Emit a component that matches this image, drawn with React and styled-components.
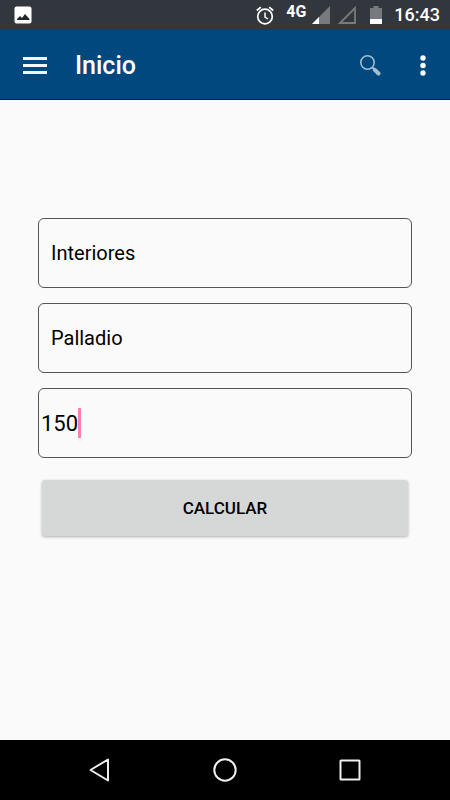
import { useState } from 'react'
import styled, { createGlobalStyle } from 'styled-components'

const App = () => {
    const [category, setCategory] = useState('Interiores')
    const [product, setProduct] = useState('Palladio')
    const [amount, setAmount] = useState('150')

    const handleSubmit = (e) => {
        e.preventDefault()
    }

    return (
        <Screen>
            <GlobalStyle />
            <StatusBar>
                <svg width='18' height='18' viewBox='0 0 18 18'>
                    <rect x='0.5' y='0.5' width='17' height='17' rx='2' fill='#fff' />
                    <path d='M3 14v-1l3-3 2 2 3-4 4.500 5v1z' fill='#22262b' />
                </svg>
                <StatusIcons>
                    {/* alarm */}
                    <svg width='18' height='19' viewBox='0 0 18 19' fill='none' stroke='#fff'>
                        <circle cx='9' cy='10.500' r='7.300' strokeWidth='1.700' />
                        <path d='M9 6.500v4.500l3 2' strokeWidth='1.500' />
                        <path d='M0.800 4.500l4-3.400M17.200 4.500l-4-3.400' strokeWidth='1.700' />
                    </svg>
                    <Network>4G</Network>
                    {/* signal, sim 1 and sim 2 */}
                    <Signal width='18' height='18' viewBox='0 0 18 18'>
                        <path d='M18 0v18H0z' fill='#777a7e' />
                        <path d='M7 11v7H0z' fill='#fff' />
                    </Signal>
                    <Signal $second width='18' height='18' viewBox='0 0 18 18'>
                        <path d='M17 2v15H2z' fill='none' stroke='#777a7e' strokeWidth='1.800' />
                    </Signal>
                    <Battery width='12' height='18' viewBox='0 0 12 18'>
                        <path d='M3.500 0h5v2H12v11H0V2h3.500z' fill='#777a7e' />
                        <path d='M0 13h12v4.500q0 .5-.5.5H.5q-.5 0-.5-.5z' fill='#fff' />
                    </Battery>
                    <Clock>16:43</Clock>
                </StatusIcons>
            </StatusBar>

            <Toolbar>
                <IconButton type='button' aria-label='Menu'>
                    <svg width='24' height='18' viewBox='0 0 24 18' fill='#f5f5ff'>
                        <rect y='0' width='24' height='3' />
                        <rect y='7' width='24' height='3' />
                        <rect y='14' width='24' height='3' />
                    </svg>
                </IconButton>
                <Title>Inicio</Title>
                <Actions>
                    <IconButton type='button' aria-label='Buscar'>
                        <svg width='21' height='21' viewBox='0 0 21 21' fill='none' stroke='#a3bdd2'>
                            <circle cx='7.500' cy='7.500' r='6.700' strokeWidth='1.600' />
                            <path d='M12 12l2.500 2.500' strokeWidth='2' />
                            <path d='M14.800 14.800l3.700 3.700' strokeWidth='4' strokeLinecap='round' />
                        </svg>
                    </IconButton>
                    <IconButton type='button' aria-label='Más opciones'>
                        <svg width='6' height='21' viewBox='0 0 6 21' fill='#fff'>
                            <circle cx='3' cy='3' r='2.700' />
                            <circle cx='3' cy='10.500' r='2.700' />
                            <circle cx='3' cy='18' r='2.700' />
                        </svg>
                    </IconButton>
                </Actions>
            </Toolbar>

            <Form onSubmit={handleSubmit}>
                <Select aria-label='Categoría' value={category} onChange={(e) => setCategory(e.target.value)}>
                    <option>Interiores</option>
                </Select>
                <Select aria-label='Producto' value={product} onChange={(e) => setProduct(e.target.value)}>
                    <option>Palladio</option>
                </Select>
                <AmountField>
                    <AmountInput
                        type='text'
                        inputMode='numeric'
                        aria-label='Cantidad'
                        $chars={amount.length}
                        value={amount}
                        onChange={(e) => setAmount(e.target.value)}
                    />
                    <Caret />
                </AmountField>
                <SubmitButton type='submit'>CALCULAR</SubmitButton>
            </Form>

            <NavBar>
                <NavButton type='button' aria-label='Atrás'>
                    <svg width='24' height='24' viewBox='0 0 24 24'>
                        <path d='M20 1.500v21L2.500 12z' strokeLinejoin='round' />
                    </svg>
                </NavButton>
                <NavButton type='button' aria-label='Inicio'>
                    <svg width='24' height='24' viewBox='0 0 24 24'>
                        <circle cx='12' cy='12' r='10.700' />
                    </svg>
                </NavButton>
                <NavButton type='button' aria-label='Recientes'>
                    <svg width='24' height='24' viewBox='0 0 24 24'>
                        <rect x='2.500' y='2.500' width='19' height='19' rx='0.500' />
                    </svg>
                </NavButton>
            </NavBar>
        </Screen>
    )
}

export default App

const GlobalStyle = createGlobalStyle`
* {
    box-sizing: border-box;
}
body {
    margin: 0;
    background: #fafafa;
    font-family: Roboto, sans-serif;
}
button, input, select {
    font-family: inherit;
}
svg {
    display: block;
}
`

const Screen = styled.div`
    display: flex;
    flex-direction: column;
    min-height: 100vh;
`

const StatusBar = styled.div`
    display: flex;
    align-items: center;
    justify-content: space-between;
    height: 30px;
    padding: 0 10px 0 14px;
    background: #32373e;
    color: #fff;
`

const StatusIcons = styled.div`
    display: flex;
    align-items: center;
`

const Network = styled.span`
    align-self: flex-start;
    margin-left: 12px;
    font-size: 16px;
    font-weight: 700;
    line-height: 14px;
`

const Signal = styled.svg`
    margin-left: ${props => props.$second ? '8px' : '6px'};
`

const Battery = styled.svg`
    margin-left: 14px;
`

const Clock = styled.span`
    margin-left: 12px;
    font-size: 18px;
    font-weight: 500;
    line-height: 20px;
`

const Toolbar = styled.header`
    display: flex;
    align-items: center;
    height: 70px;
    padding: 2px 12px 0 11px;
    border-bottom: 1px solid #001f5c;
    background: #00487e;
`

const Actions = styled.div`
    display: flex;
    gap: 15px;
`

const IconButton = styled.button`
    display: flex;
    align-items: center;
    justify-content: center;
    height: 48px;
    padding: 0 12px;
    border: 0;
    background: none;
    cursor: pointer;
`

const Title = styled.h1`
    flex: 1;
    margin: 0 0 0 16px;
    color: #fff;
    font-size: 25px;
    font-weight: 500;
    line-height: 32px;
`

const Form = styled.form`
    display: flex;
    flex: 1;
    flex-direction: column;
    gap: 15px;
    padding: 118px 38px 24px;
`

const Select = styled.select`
    appearance: none;
    height: 70px;
    padding: 0 12px;
    border: 1px solid #555;
    border-radius: 6px;
    background: #fafafa;
    color: #000;
    font-size: 20px;
`

const AmountField = styled.div`
    display: flex;
    align-items: center;
    height: 70px;
    padding: 0 2px;
    border: 1px solid #555;
    border-radius: 6px;
`

const AmountInput = styled.input`
    width: ${props => props.$chars}ch;
    height: 32px;
    padding: 0;
    border: 0;
    outline: 0;
    background: none;
    color: #000;
    font-size: 22px;
    caret-color: transparent;
`

const Caret = styled.span`
    width: 3px;
    height: 30px;
    background: #ff80ab;
`

const SubmitButton = styled.button`
    height: 56px;
    margin: 7px 4px 0;
    border: 0;
    border-radius: 3px;
    background: #d6d7d7;
    box-shadow: 0 1px 3px rgba(0, 0, 0, .3);
    color: #000;
    font-size: 17px;
    font-weight: 500;
    cursor: pointer;
`

const NavBar = styled.nav`
    display: grid;
    grid-template-columns: repeat(3, 1fr);
    height: 60px;
    padding: 0 38px;
    background: #000;
`

const NavButton = styled.button`
    display: flex;
    align-items: center;
    justify-content: center;
    border: 0;
    background: none;
    cursor: pointer;

    svg {
        fill: none;
        stroke: #eee;
        stroke-width: 2;
    }
`
